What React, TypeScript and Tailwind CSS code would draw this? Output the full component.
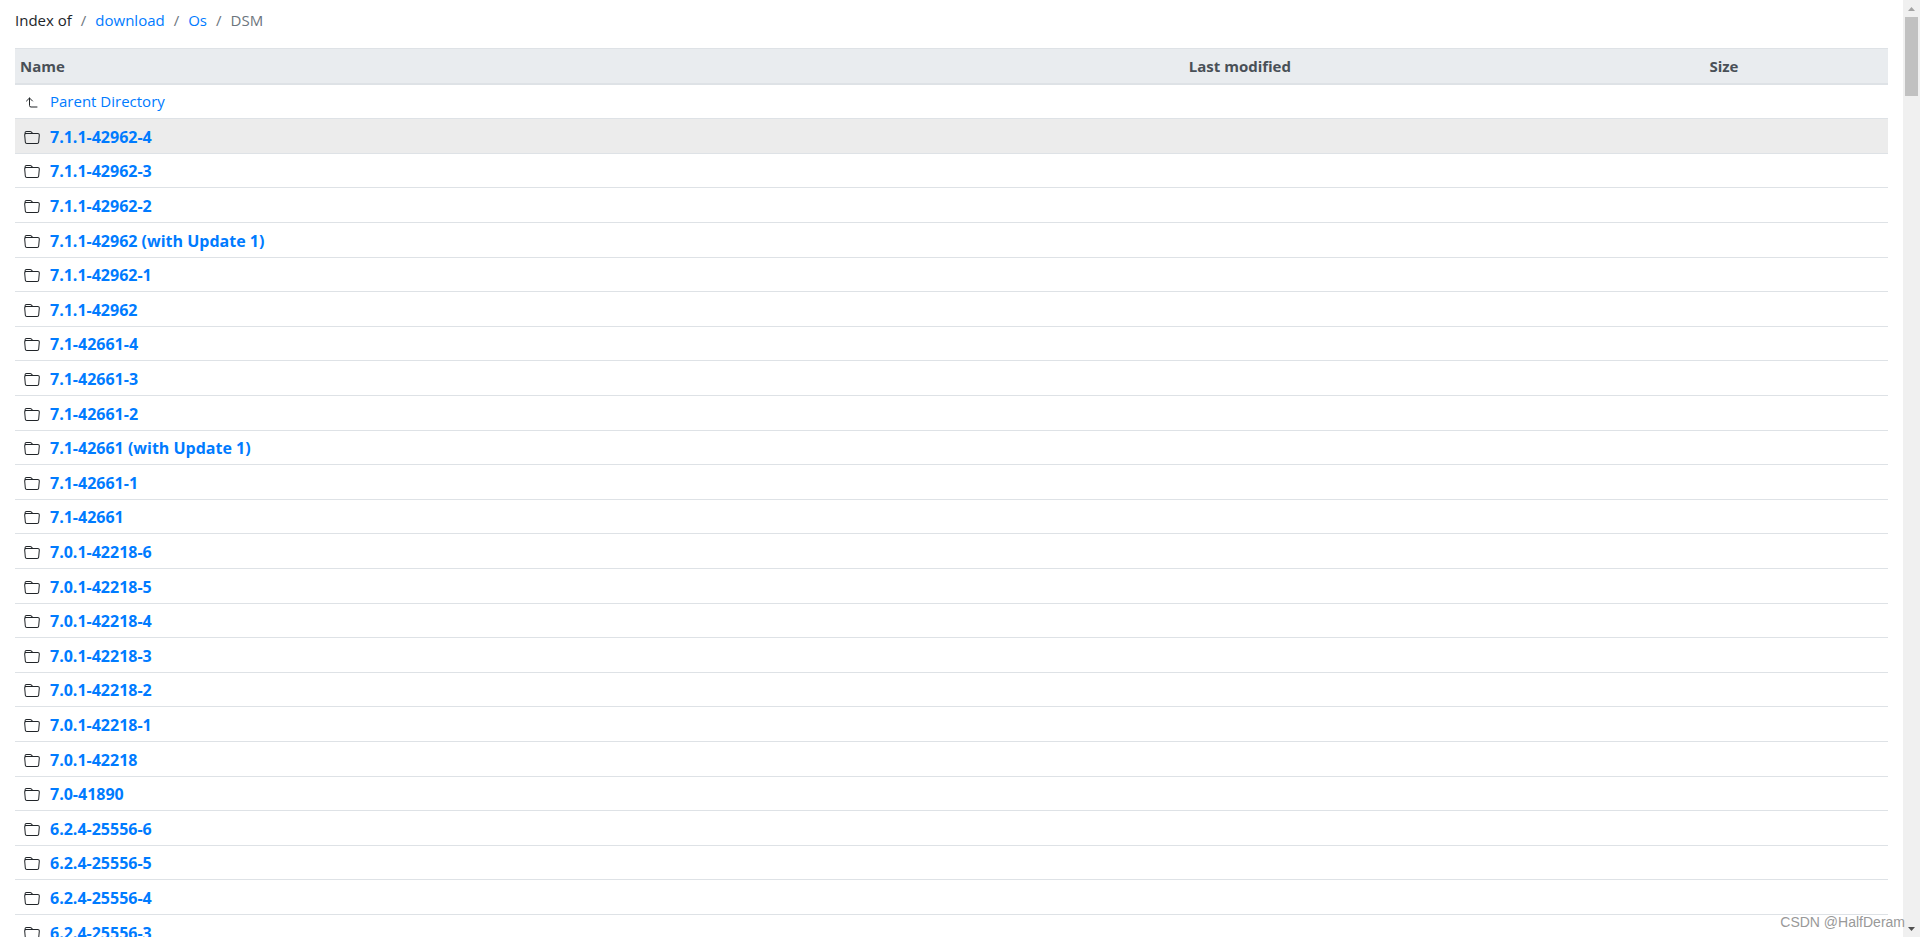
import { BsFolder } from "react-icons/bs";

const CRUMBS = [
  { label: "download", href: "#download" },
  { label: "Os", href: "#os" },
];

const FOLDERS = [
  "7.1.1-42962-4",
  "7.1.1-42962-3",
  "7.1.1-42962-2",
  "7.1.1-42962 (with Update 1)",
  "7.1.1-42962-1",
  "7.1.1-42962",
  "7.1-42661-4",
  "7.1-42661-3",
  "7.1-42661-2",
  "7.1-42661 (with Update 1)",
  "7.1-42661-1",
  "7.1-42661",
  "7.0.1-42218-6",
  "7.0.1-42218-5",
  "7.0.1-42218-4",
  "7.0.1-42218-3",
  "7.0.1-42218-2",
  "7.0.1-42218-1",
  "7.0.1-42218",
  "7.0-41890",
  "6.2.4-25556-6",
  "6.2.4-25556-5",
  "6.2.4-25556-4",
  "6.2.4-25556-3",
];

const ACTIVE_FOLDER = "7.1.1-42962-4";

function UpIcon() {
  return (
    <svg
      viewBox="0 0 16 16"
      className="mt-0.5 size-4 shrink-0"
      fill="none"
      stroke="currentColor"
      strokeLinecap="round"
      strokeLinejoin="round"
      aria-hidden="true"
    >
      <path d="M2.500 7l3-3 3 3M5.500 4v7.500q0 1.500 1.500 1.500h6" />
    </svg>
  );
}

function Breadcrumb() {
  return (
    <nav aria-label="Breadcrumb" className="h-12 pt-2">
      <ol className="flex gap-[9px]">
        <li>Index of</li>
        {CRUMBS.map((crumb) => (
          <li key={crumb.label} className="flex gap-[9px]">
            <span className="text-[#6c757d]">/</span>
            <a href={crumb.href} className="text-[#007bff] hover:underline">
              {crumb.label}
            </a>
          </li>
        ))}
        <li className="flex gap-[9px] text-[#6c757d]" aria-current="page">
          <span>/</span>
          <span>DSM</span>
        </li>
      </ol>
    </nav>
  );
}

function Listing() {
  return (
    <table className="w-full table-fixed border-separate border-spacing-0 text-left">
      <thead>
        <tr className="h-[37px] bg-[#e9ecef] text-[#495057] [&>th]:border-t [&>th]:border-b-2 [&>th]:border-[#dee2e6] [&>th]:px-[5px] [&>th]:py-0">
          <th scope="col" className="w-[62.4%]">Name</th>
          <th scope="col" className="w-[27.8%]">Last modified</th>
          <th scope="col">Size</th>
        </tr>
      </thead>
      <tbody className="[&>tr]:h-[35px] [&>tr:nth-child(5n+1)]:h-[34px] [&>tr:nth-child(5n+3)]:h-[34px] [&_td]:border-b [&_td]:border-[#dee2e6] [&_td]:px-[9px] [&_td]:py-0">
        <tr>
          <td>
            <div className="flex items-center gap-[10px] pb-px">
              <UpIcon />
              <a href="#parent" className="text-[#007bff] hover:underline">
                Parent Directory
              </a>
            </div>
          </td>
          <td />
          <td />
        </tr>
        {FOLDERS.map((name) => (
          <tr key={name} className={name === ACTIVE_FOLDER ? "bg-[#ececec]" : "hover:bg-[#ececec]"}>
            <td>
              <div className="flex items-center gap-[10px] pt-px">
                <BsFolder className="mt-0.5 size-4 shrink-0" aria-hidden="true" />
                <a href="#folder" className="text-[16px] font-bold text-[#007bff] hover:underline">
                  {name}
                </a>
              </div>
            </td>
            <td />
            <td />
          </tr>
        ))}
      </tbody>
    </table>
  );
}

function Scrollbar() {
  return (
    <div className="flex w-[17px] shrink-0 flex-col items-center bg-[#f0f0f0]" aria-hidden="true">
      <div className="flex h-[17px] items-center">
        <svg viewBox="0 0 7 4" className="h-1 w-[7px]" fill="#a3a3a3">
          <path d="M3.500 0L7 4H0z" />
        </svg>
      </div>
      <div className="h-[79px] w-[13px] bg-[#c1c1c1]" />
      <div className="mt-auto flex h-[17px] items-center">
        <svg viewBox="0 0 7 4" className="h-1 w-[7px]" fill="#505050">
          <path d="M3.500 4L7 0H0z" />
        </svg>
      </div>
    </div>
  );
}

export default function App() {
  return (
    <div className="relative flex h-screen overflow-hidden bg-white font-['Open_Sans','Noto_Sans',sans-serif] text-[15px] leading-6 text-[#212529]">
      <main className="min-w-0 flex-1 px-[15px]">
        <Breadcrumb />
        <Listing />
      </main>
      <Scrollbar />
      <p className="absolute right-[15px] bottom-[5px] font-['Liberation_Sans',sans-serif] text-[14px] leading-5 text-[#999999]">
        CSDN @HalfDeram
      </p>
    </div>
  );
}
